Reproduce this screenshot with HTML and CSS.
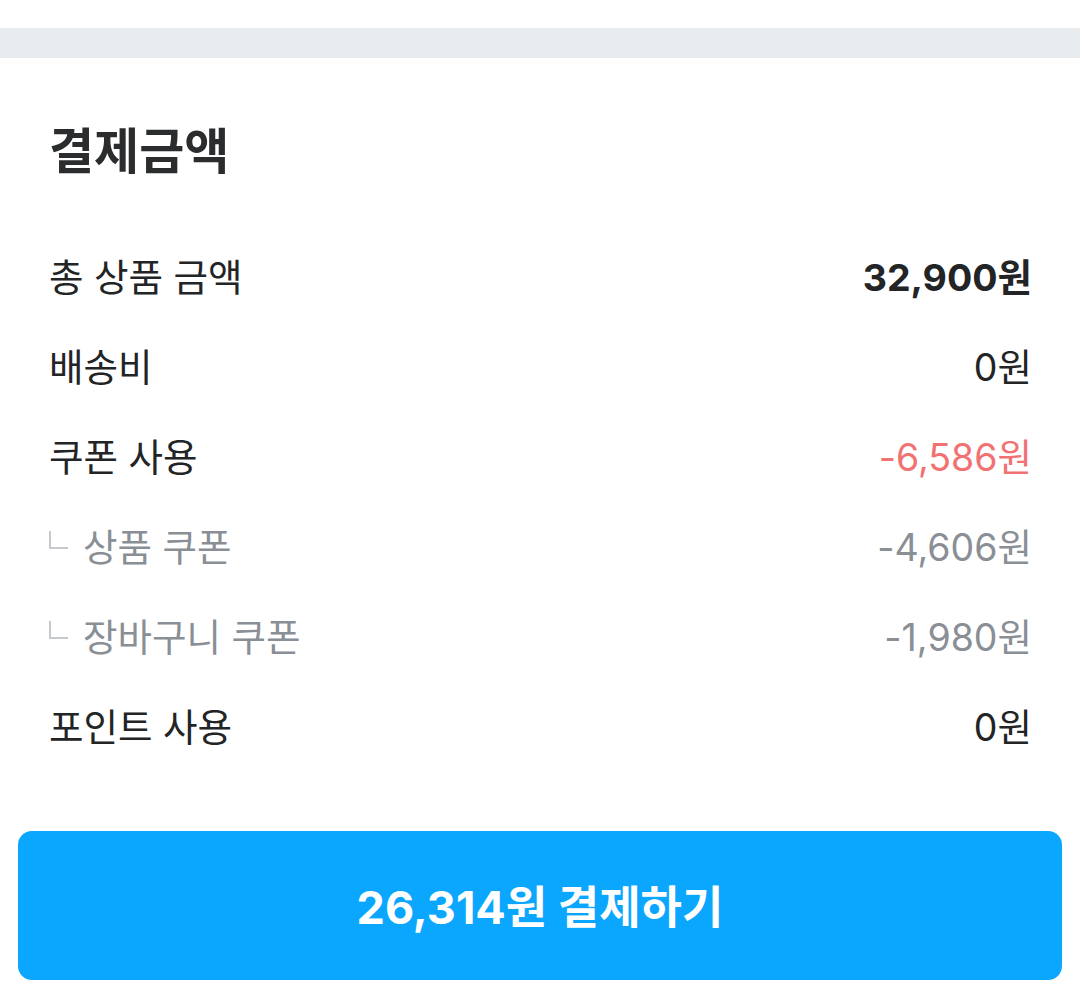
FILE: index.html
```html
<!DOCTYPE html>
<html lang="ko">
<head>
<meta charset="utf-8">
<link rel="stylesheet" href="styles.css">
</head>
<body>
<div class="top"></div>
<div class="divider"></div>
<section class="summary">
  <h2 class="title">결제금액</h2>
  <div class="rows">
    <div class="row"><span class="label">총 상품 금액</span><span class="value strong">32,900원</span></div>
    <div class="row"><span class="label">배송비</span><span class="value">0원</span></div>
    <div class="row"><span class="label">쿠폰 사용</span><span class="value red">-6,586원</span></div>
    <div class="row sub"><span class="label"><span class="corner"></span>상품 쿠폰</span><span class="value">-4,606원</span></div>
    <div class="row sub"><span class="label"><span class="corner"></span>장바구니 쿠폰</span><span class="value">-1,980원</span></div>
    <div class="row"><span class="label">포인트 사용</span><span class="value">0원</span></div>
  </div>
  <button class="pay">26,314원 결제하기</button>
</section>
</body>
</html>
```
FILE: styles.css
```css
* { box-sizing: border-box; }
html, body { margin: 0; padding: 0; background: #fff; }
body {
  font-family: "Inter", "Noto Sans CJK KR", sans-serif;
  color: #222426;
  width: 1080px;
  height: 998px;
  overflow: hidden;
}
.top { height: 28px; background: #fff; }
.divider { height: 30px; background: #e9ecef; }
.summary { padding: 66px 0 0; }
.title {
  margin: 0 49px;
  font-size: 49px;
  line-height: 56px;
  font-weight: 700;
  color: #2a2c2e;
}
.rows { margin-top: 49px; padding: 0 48px 0 49px; }
.row {
  display: flex;
  justify-content: space-between;
  align-items: center;
  height: 90px;
  font-size: 37.5px;
}
.label { display: flex; align-items: center; }
.value.strong { font-weight: 700; }
.value.red { color: #f07272; }
.row.sub { color: #8a8f95; }
.corner {
  display: inline-block;
  width: 19px;
  height: 18px;
  border-left: 2px solid #c5c8cc;
  border-bottom: 2px solid #c5c8cc;
  margin: 0 15px 0 0;
  position: relative;
  top: -4px;
}
.pay {
  display: block;
  margin: 62px 18px 0;
  width: 1044px;
  height: 149px;
  border: none;
  border-radius: 14px;
  background: #0ba6fe;
  color: #fff;
  font-family: "Inter", "Noto Sans CJK KR", sans-serif;
  font-size: 45px;
  font-weight: 700;
  padding: 0 0 2px;
}
```
